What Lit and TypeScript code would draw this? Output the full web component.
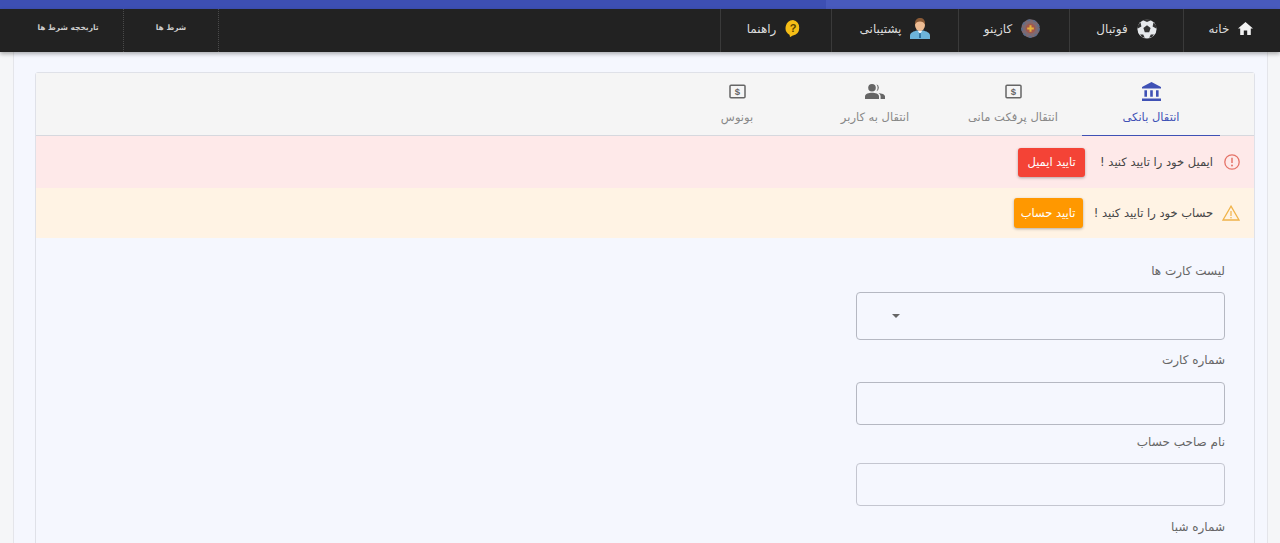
import { LitElement, html, css } from "lit";
import { customElement } from "lit/decorators.js";

const money = html`<svg width="17" height="15" viewBox="0 0 17 15"><rect x="1" y="1.2" width="15" height="12.6" rx="1" fill="none" stroke="#666" stroke-width="1.5"/><text x="8.5" y="11.2" text-anchor="middle" font-size="9.5" font-weight="700" font-family="Liberation Sans" fill="#666">$</text></svg>`;

const icons = {
  home: html`<svg width="15" height="13" viewBox="0 0 15 13"><path d="M7.5 0 L15 6.6 H12.8 V13 H9.2 V8.5 H5.8 V13 H2.2 V6.6 H0 Z" fill="#f2f2f2"/></svg>`,
  ball: html`<svg width="20" height="20" viewBox="0 0 20 20"><circle cx="10" cy="10" r="9.6" fill="#e6e9ec"/><path d="M10 6.3 L13.6 9 L12.2 13.2 H7.8 L6.4 9 Z" fill="#333"/><path d="M6 1.2 L10 3 L14 1.2 L12 .3 H8 Z M16.5 3.2 L15.6 7.4 L19.2 9.4 L19.6 7 Z M3.5 3.2 L4.4 7.4 L.8 9.4 L.4 7 Z M3 15.6 L6.2 15.4 L7.8 18.8 L5 18 Z M17 15.6 L13.8 15.4 L12.2 18.8 L15 18 Z" fill="#333"/></svg>`,
  chip: html`<svg width="19" height="19" viewBox="0 0 19 19"><circle cx="9.5" cy="9.5" r="9.2" fill="#7d6a72"/><circle cx="9.5" cy="9.5" r="8.4" fill="none" stroke="#5b6d8c" stroke-width="1.8" stroke-dasharray="3 3"/><circle cx="9.5" cy="9.5" r="5" fill="#a1584c"/><path d="M9.5 6.2 V12.8 M6.2 9.5 H12.8" stroke="#e5b23c" stroke-width="2"/></svg>`,
  agent: html`<svg width="20" height="21" viewBox="0 0 20 21"><path d="M0 21 V17.5 C0 14.5 4 13.2 7 12.5 H13 C16 13.2 20 14.5 20 17.5 V21 Z" fill="#6db4d9"/><path d="M7.5 12.5 L10 16 L12.5 12.5 Z" fill="#eef6fb"/><path d="M9.2 15 H10.8 L11 20 H9 Z" fill="#2d6f9c"/><ellipse cx="10" cy="7" rx="5" ry="6" fill="#eebc93"/><path d="M5 6.5 C4.6 1.5 7.5 0 10 0 C13 0 15.4 1.8 15 6.5 C14 4.6 12.5 3.6 10 3.6 C7.5 3.6 6 4.6 5 6.5 Z" fill="#8a5a36"/></svg>`,
  help: html`<svg width="16" height="17" viewBox="0 0 16 17"><path d="M8 0 A8 8 0 0 1 8 15.6 C7 15.6 6 17 5 17 C4.6 16 4.8 15 4.4 14.8 A8 8 0 0 1 8 0 Z" fill="#f5bd16"/><text x="8" y="12" text-anchor="middle" font-size="11" font-weight="700" font-family="Liberation Sans" fill="#5a4300">?</text></svg>`,
  bank: html`<svg width="19" height="19" viewBox="0 0 19 19"><path d="M9.5 0 L19 5 V6.6 H0 V5 Z M0 16.4 H19 V19 H0 Z M2.4 8.2 H5 V14.8 H2.4 Z M8.2 8.2 H10.8 V14.8 H8.2 Z M14 8.2 H16.6 V14.8 H14 Z" fill="#3f51b5"/></svg>`,
  people: html`<svg width="20" height="15" viewBox="0 0 20 15"><circle cx="7" cy="3.8" r="3.8" fill="#666"/><path d="M0 15 V12.6 C0 9.8 4 8.8 7 8.8 C10 8.8 14 9.8 14 12.6 V15 Z" fill="#666"/><path d="M11.5 .3 A3.8 3.8 0 0 1 11.5 7.3 C13 5.4 13 2.2 11.5 .3 Z M13.5 9 C16.5 9.4 20 10.4 20 12.6 V15 H15.6 V12.4 C15.6 11 14.8 9.9 13.5 9 Z" fill="#666"/></svg>`,
};

@customElement("app-root")
export class AppRoot extends LitElement {
  static styles = css`
    :host {
      display: block;
      height: 543px;
      overflow: hidden;
      background: #f5f6f8;
      font-family: "DejaVu Sans", "Noto Sans", sans-serif;
      direction: rtl;
    }
    .strip { height: 9px; background: linear-gradient(90deg, #3d4fb3 826px, #485abd 826px); }
    .nav {
      height: 43px;
      background: #222;
      display: flex;
      color: #ddd;
      font-size: 12px;
      box-shadow: 0 2px 4px rgba(0, 0, 0, .3);
      position: relative;
    }
    .nav-item {
      display: flex;
      align-items: center;
      justify-content: center;
      gap: 9px;
      border-left: 1px solid #3a3a3a;
      padding-bottom: 4px;
      box-sizing: border-box;
    }
    .nav-item.home { width: 97px; gap: 9px; padding-right: 2px; }
    .nav-item.ball { width: 114px; }
    .nav-item.chip { width: 111px; padding-right: 4px; }
    .nav-item.agent { width: 127px; }
    .nav-item.help { width: 111px; padding-right: 4px; }
    .spacer { flex: 1; }
    .nav-sub {
      display: flex;
      align-items: center;
      justify-content: center;
      font-size: 7.5px;
      font-weight: 700;
      padding-bottom: 6px;
      box-sizing: border-box;
      color: #ccc;
    }
    .nav-sub.a { width: 96px; border-left: 1px dotted #4a4a4a; border-right: 1px dotted #4a4a4a; }
    .nav-sub.b { width: 110px; margin-left: 13px; }
    .page {
      margin: 0 12px 0 13px;
      height: 491px;
      box-sizing: border-box;
      background: #f5f7fe;
      border-left: 1px solid #e4e5ea;
      border-right: 1px solid #e4e5ea;
      padding: 20px 12px 0 21px;
      overflow: hidden;
    }
    .card {
      border: 1px solid #dfe1e8;
      border-radius: 3px 3px 0 0;
      height: 600px;
    }
    .tabs {
      display: flex;
      height: 62px;
      background: #f5f5f5;
      border-bottom: 1px solid #d6d8de;
      padding-right: 34px;
    }
    .tab {
      width: 138px;
      display: flex;
      flex-direction: column;
      align-items: center;
      padding-top: 9px;
      box-sizing: border-box;
      color: #888;
      font-size: 11.5px;
      position: relative;
    }
    .tab .ic { height: 19px; display: flex; align-items: center; margin-bottom: 9px; }
    .tab.active { color: #3f51b5; }
    .tab.active::after {
      content: "";
      position: absolute;
      left: 0;
      right: 0;
      bottom: -1px;
      height: 1.5px;
      background: #3f51b5;
    }
    .alert {
      display: flex;
      align-items: center;
      padding: 0 14px;
      font-size: 11.5px;
      color: #444;
    }
    .alert.red { height: 52px; background: #fee9e9; }
    .alert.amber { height: 50px; background: #fff3e4; }
    .alert .msg { margin-right: 11px; }
    .alert.amber .msg { margin-right: 9px; }
    .btn {
      border: 0;
      border-radius: 3px;
      height: 29px;
      padding: 0;
      color: #fff;
      font: inherit;
      font-size: 11.5px;
      box-shadow: 0 1px 3px rgba(0, 0, 0, .3);
    }
    .red .btn { background: #f44336; width: 67px; margin-right: 15px; }
    .amber .btn { background: #ff9800; width: 69px; height: 30px; margin-right: 11px; }
    .form {
      width: 369px;
      margin-right: 29px;
      display: flex;
      flex-direction: column;
      color: #666;
      font-size: 12px;
    }
    label { display: block; line-height: 14px; }
    .box {
      border: 1px solid #b5b8c2;
      border-radius: 4px;
      box-sizing: border-box;
      height: 43px;
      display: flex;
      align-items: center;
    }
    .box.sel { height: 48px; justify-content: flex-end; padding-left: 35px; margin-top: 14px; margin-bottom: 13px; }
    .arrow { width: 0; height: 0; border: 4px solid transparent; border-top: 4px solid #666; border-bottom: 0; }
    .l1 { margin-top: 26px; }
    .card-box { margin-top: 15px; margin-bottom: 10px; }
    .holder-box { margin-top: 14px; border-color: #c4c6d0; }
    .sheba { margin-top: 14px; }
  `;

  render() {
    return html`
      <div class="strip"></div>
      <nav class="nav">
        <div class="nav-item home">${icons.home}<span>خانه</span></div>
        <div class="nav-item ball">${icons.ball}<span>فوتبال</span></div>
        <div class="nav-item chip">${icons.chip}<span>کازینو</span></div>
        <div class="nav-item agent">${icons.agent}<span>پشتیبانی</span></div>
        <div class="nav-item help">${icons.help}<span>راهنما</span></div>
        <div class="spacer"></div>
        <div class="nav-sub a">شرط ها</div>
        <div class="nav-sub b">تاریخچه شرط ها</div>
      </nav>
      <main class="page">
        <section class="card">
          <div class="tabs">
            <div class="tab active"><span class="ic">${icons.bank}</span>انتقال بانکی</div>
            <div class="tab"><span class="ic">${money}</span>انتقال پرفکت مانی</div>
            <div class="tab"><span class="ic">${icons.people}</span>انتقال به کاربر</div>
            <div class="tab"><span class="ic">${money}</span>بونوس</div>
          </div>
          <div class="alert red">
            <svg width="16" height="16" viewBox="0 0 16 16"><circle cx="8" cy="8" r="7.2" fill="none" stroke="#e57368" stroke-width="1.3"/><path d="M8 3.8 V9" stroke="#e57368" stroke-width="1.5"/><circle cx="8" cy="11.4" r="1" fill="#e57368"/></svg>
            <span class="msg">ایمیل خود را تایید کنید !</span>
            <button class="btn">تایید ایمیل</button>
          </div>
          <div class="alert amber">
            <svg width="18" height="16" viewBox="0 0 18 16"><path d="M9 1.2 L17 15 H1 Z" fill="none" stroke="#f0b34a" stroke-width="1.3"/><path d="M9 6 V11" stroke="#f0b34a" stroke-width="1.2"/><circle cx="9" cy="12.8" r=".8" fill="#f0b34a"/></svg>
            <span class="msg">حساب خود را تایید کنید !</span>
            <button class="btn">تایید حساب</button>
          </div>
          <div class="form">
            <label class="l1">لیست کارت ها</label>
            <div class="box sel"><span class="arrow"></span></div>
            <label>شماره کارت</label>
            <div class="box card-box"></div>
            <label>نام صاحب حساب</label>
            <div class="box holder-box"></div>
            <label class="sheba">شماره شبا</label>
          </div>
        </section>
      </main>
    `;
  }
}
